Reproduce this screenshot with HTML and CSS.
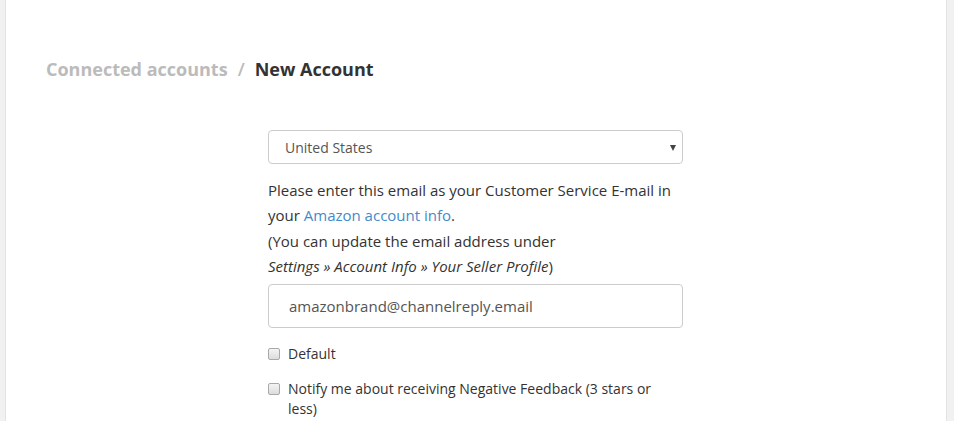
FILE: index.html
```html
<!DOCTYPE html>
<html>
<head>
<meta charset="utf-8">
<link rel="stylesheet" href="styles.css">
</head>
<body>
<div class="card">
  <h1 class="crumbs"><span class="crumb-link">Connected accounts</span><span class="sep">/</span><span class="crumb-current">New Account</span></h1>
  <form class="form">
    <div class="select">
      <span class="select-value">United States</span>
      <span class="caret"></span>
    </div>
    <p class="info">Please enter this email as your Customer Service E-mail in your <a class="link" href="#">Amazon account info</a>.<br>(You can update the email address under<br><em>Settings » Account Info » Your Seller Profile</em>)</p>
    <div class="input">amazonbrand@channelreply.email</div>
    <label class="check"><span class="box"></span><span class="check-text">Default</span></label>
    <label class="check"><span class="box"></span><span class="check-text">Notify me about receiving Negative Feedback (3 stars or less)</span></label>
  </form>
</div>
</body>
</html>
```
FILE: styles.css
```css
html, body {
  margin: 0;
  padding: 0;
  height: 100%;
}
body {
  background: #f1f1f1;
  font-family: "Open Sans", "Liberation Sans", sans-serif;
  color: #333;
  overflow: hidden;
}
.card {
  margin-left: 5px;
  width: 942px;
  min-height: 100%;
  background: #fff;
  border-left: 1px solid #e2e2e2;
  border-right: 1px solid #e2e2e2;
  padding: 56px 0 0 0;
  box-sizing: border-box;
}
.crumbs {
  margin: 0 0 48px 40px;
  font-size: 18px;
  font-weight: 700;
  line-height: 26px;
}
.crumb-link {
  color: #bbbbbb;
}
.sep {
  color: #bbbbbb;
  margin: 0 10px;
  font-weight: 600;
}
.crumb-current {
  color: #333;
}
.form {
  margin-left: 262px;
  width: 415px;
}
.select {
  height: 34px;
  box-sizing: border-box;
  border: 1px solid #cccccc;
  border-radius: 4px;
  display: flex;
  align-items: center;
  justify-content: space-between;
  padding: 0 6px 0 16px;
  font-size: 14px;
  color: #555;
}
.caret {
  width: 0;
  height: 0;
  border-left: 3.5px solid transparent;
  border-right: 3.5px solid transparent;
  border-top: 6px solid #444;
  margin-top: 1px;
}
.info {
  margin: 14px 0 5px 0;
  font-size: 15px;
  line-height: 25.3px;
  color: #333;
}
.link {
  color: #428bca;
  text-decoration: none;
}
.input {
  height: 44px;
  box-sizing: border-box;
  border: 1px solid #cccccc;
  border-radius: 4px;
  display: flex;
  align-items: center;
  padding-left: 20px;
  font-size: 15px;
  color: #555;
  margin-bottom: 16px;
}
.check {
  display: flex;
  align-items: flex-start;
  font-size: 14px;
  line-height: 20px;
  color: #333;
  margin-bottom: 15px;
}
.box {
  flex: none;
  width: 12px;
  height: 12px;
  margin: 4px 8px 0 0;
  border: 1px solid #a9a9a9;
  border-radius: 2px;
  box-sizing: border-box;
  background: linear-gradient(#f4f4f4, #dcdcdc);
}
.check-text {
  padding-right: 20px;
}
```
